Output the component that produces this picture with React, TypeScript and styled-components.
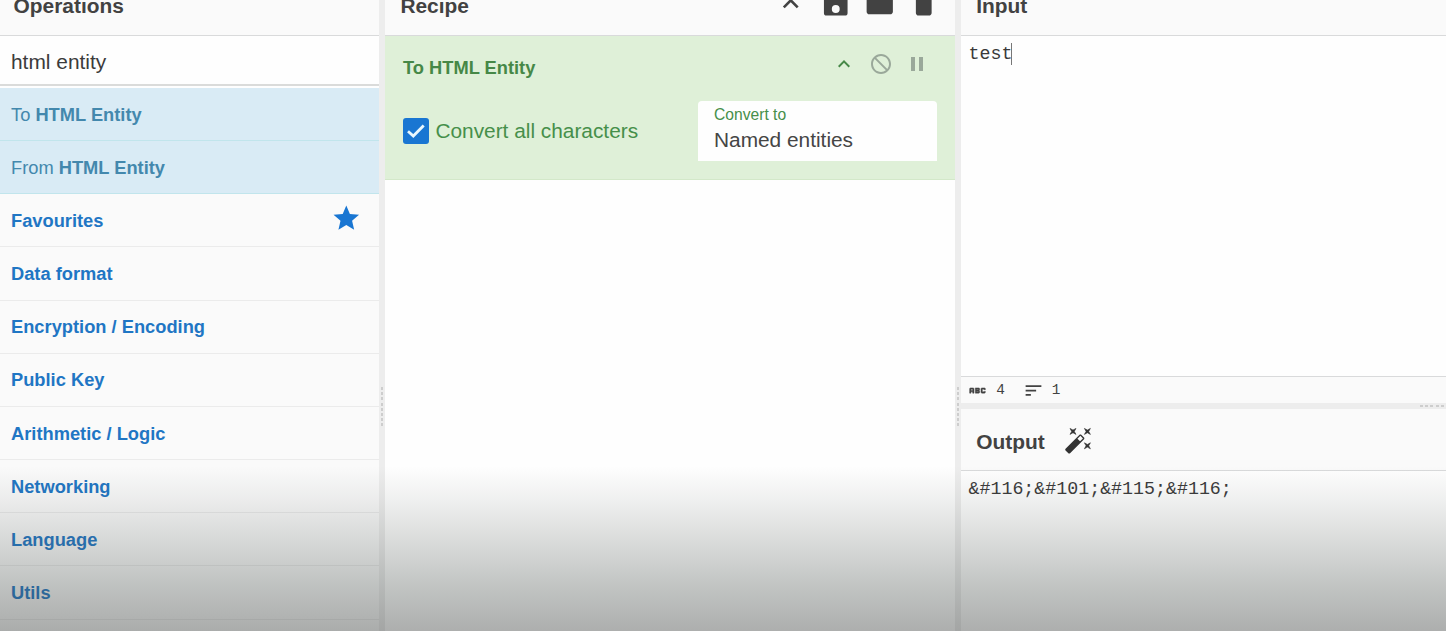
import React from 'react';
import styled, { createGlobalStyle, css } from 'styled-components';
import { MdAbc, MdSort, MdStar, MdKeyboardArrowUp, MdFolder, MdPause, MdNotInterested, MdDelete } from 'react-icons/md';

const GlobalStyle = createGlobalStyle`
  *, *::before, *::after { box-sizing: border-box; }
  html, body { margin: 0; height: 100%; overflow: hidden; background: #fefefe; }
  body { font-family: "Liberation Sans", Arial, sans-serif; color: #424242; }
  svg { display: block; flex: none; }
`;

const Workspace = styled.div`
  position: relative;
  display: grid;
  grid-template-columns: 379px 6px 570px 6px 1fr;
  width: 100%;
  height: 631px;
  overflow: hidden;
  background: #fefefe;
`;

const Column = styled.section`
  display: flex;
  flex-direction: column;
  min-width: 0;
  height: 657px;
  margin-top: -26px;
`;

const Title = styled.header<{ $inset: number; $drop?: number }>`
  display: flex;
  align-items: center;
  flex: none;
  height: 62px;
  padding: ${(p) => p.$drop ?? 2}px 22px 0 ${(p) => p.$inset}px;
  background: #fafafa;
  border-bottom: 1px solid #d9dadb;
  font-size: 20.9px;
  font-weight: 700;
  line-height: 24px;
`;

const Gutter = styled.div<{ $horizontal?: boolean }>`
  display: flex;
  flex: none;
  background: #ededed;
  ${(p) =>
    p.$horizontal
      ? css`
          height: 6px;
          align-items: center;
          padding-left: 459px;
        `
      : css`
          justify-content: center;
          padding-top: 387px;
        `}
`;

const Grip = styled.span<{ $horizontal?: boolean }>`
  ${(p) =>
    p.$horizontal
      ? css`
          width: 26px;
          height: 2px;
          background: repeating-linear-gradient(90deg, #cdcdcd 0 3px, transparent 3px 5.2px);
        `
      : css`
          width: 2px;
          height: 39px;
          background: repeating-linear-gradient(180deg, #cdcdcd 0 3px, transparent 3px 5.2px);
        `}
`;

const Search = styled.input`
  flex: none;
  width: 100%;
  height: 50px;
  margin: 0 0 2px;
  padding: 4px 11px 0;
  border: 0;
  border-bottom: 2px solid #dadbda;
  border-radius: 0;
  outline: 0;
  background: #fefefe;
  color: #3b3b3b;
  font: 20.9px "Liberation Sans", Arial, sans-serif;
`;

const List = styled.ul`
  margin: 0;
  padding: 0;
  list-style: none;
`;

const Operation = styled.li`
  display: flex;
  align-items: center;
  height: 53.17px;
  padding: 1px 11px 0;
  background: #d9ebf5;
  border-bottom: 1px solid #c1e5ec;
  color: #4388ad;
  font-size: 18.3px;
  white-space: pre;
`;

const Category = styled.li`
  display: flex;
  align-items: center;
  justify-content: space-between;
  height: 53.17px;
  padding: 1px 17.6px 0 11px;
  background: #fafafa;
  border-bottom: 1px solid #ebebeb;
  color: #1f76c4;
  font-size: 18.3px;
  font-weight: 700;

  svg { margin-top: -4.6px; }
`;

const HeaderTools = styled.div`
  display: flex;
  align-items: center;
  gap: 12.8px;
  margin: -3px -6.8px 0 auto;
`;

const Ingredient = styled.article`
  flex: none;
  height: 144px;
  padding: 15px 18px 0;
  background: #dff0d8;
  border-bottom: 1px solid #d3e8c9;
  color: #468f4a;
`;

const IngredientHead = styled.div`
  display: flex;
  align-items: center;
  justify-content: space-between;
  height: 32px;
  padding-top: 1px;
  color: #468847;
  font-size: 18.3px;
  font-weight: 700;
`;

const IngredientTools = styled.div`
  display: flex;
  gap: 12.5px;
  margin: -7.4px 7.7px 0 0;
  color: #9aa89a;
`;

const Arguments = styled.div`
  display: flex;
  align-items: center;
  justify-content: space-between;
  height: 60px;
  margin-top: 18px;
`;

const CheckLabel = styled.label`
  display: flex;
  align-items: center;
  gap: 6.4px;
  font-size: 20.85px;
`;

const CheckBox = styled.span`
  display: flex;
  align-items: center;
  justify-content: center;
  width: 26px;
  height: 26px;
  border-radius: 3px;
  background: #1976d2;
`;

const Select = styled.div`
  display: flex;
  flex-direction: column;
  width: 239px;
  height: 60px;
  padding: 5px 16px 0;
  border-radius: 4px 4px 0 0;
  background: #fefefe;
`;

const SelectLabel = styled.span`
  font-size: 15.65px;
  line-height: 18px;
`;

const SelectValue = styled.span`
  margin-top: 4px;
  color: #454545;
  font-size: 20.85px;
  line-height: 24px;
`;

const Editor = styled.div<{ $height?: number }>`
  display: flex;
  align-items: flex-start;
  flex: ${(p) => (p.$height ? 'none' : '1')};
  height: ${(p) => (p.$height ? `${p.$height}px` : 'auto')};
  padding: 7px 7.5px 0;
  background: #fefefe;
  color: #3a3a3a;
  font-family: "Liberation Mono", "Courier New", monospace;
  font-size: 18.3px;
  line-height: 22px;
`;

const Caret = styled.span`
  width: 1px;
  height: 22px;
  margin-left: -1px;
  background: #777;
`;

const Status = styled.footer`
  display: flex;
  align-items: center;
  flex: none;
  height: 27px;
  padding: 0 6px;
  background: #fafafa;
  border-top: 1px solid #d9dadb;
  font-family: "Liberation Mono", "Courier New", monospace;
  font-size: 14.4px;
`;

const LengthIcon = styled(MdAbc)`
  path:last-child {
    stroke: currentColor;
    stroke-width: 0.5px;
  }
`;

const Count = styled.span`
  margin: -1px 17.8px 0 8.2px;
`;

const Shade = styled.div`
  position: absolute;
  inset: 466px 0 0;
  background: linear-gradient(
    rgba(70, 78, 74, 0) 0%,
    rgba(70, 78, 74, 0.08) 20%,
    rgba(70, 78, 74, 0.2) 46%,
    rgba(70, 78, 74, 0.33) 73%,
    rgba(66, 70, 68, 0.43) 100%
  );
  pointer-events: none;
`;

const SaveIcon = () => (
  <svg width="31.5" height="31.5" viewBox="0 0 24 24" fill="currentColor">
    <path d="M15,9H5V5H15M12,19A3,3 0 0,1 9,16A3,3 0 0,1 12,13A3,3 0 0,1 15,16A3,3 0 0,1 12,19M17,3H5C3.89,3 3,3.9 3,5V19A2,2 0 0,0 5,21H19A2,2 0 0,0 21,19V7L17,3Z" />
  </svg>
);

const WandIcon = styled.svg`
  margin: -3px 0 0 19px;
  fill: #333;
`;

const operations = ['To ', 'From '];
const categories = [
  'Favourites',
  'Data format',
  'Encryption / Encoding',
  'Public Key',
  'Arithmetic / Logic',
  'Networking',
  'Language',
  'Utils',
  '',
];

export default function App() {
  return (
    <>
      <GlobalStyle />
      <Workspace>
        <Column>
          <Title $inset={13.6}>Operations</Title>
          <Search defaultValue="html entity" spellCheck={false} />
          <List>
            {operations.map((prefix) => (
              <Operation key={prefix}>
                {prefix}
                <b>HTML Entity</b>
              </Operation>
            ))}
            {categories.map((name) => (
              <Category key={name}>
                {name}
                {name === 'Favourites' && <MdStar size={30.6} color="#1976d2" />}
              </Category>
            ))}
          </List>
        </Column>
        <Gutter>
          <Grip />
        </Gutter>
        <Column>
          <Title $inset={15.4}>
            Recipe
            <HeaderTools>
              <MdKeyboardArrowUp size={31.5} />
              <SaveIcon />
              <MdFolder size={31.5} />
              <MdDelete size={31.5} />
            </HeaderTools>
          </Title>
          <Ingredient>
            <IngredientHead>
              To HTML Entity
              <IngredientTools>
                <MdKeyboardArrowUp size={24} color="#468847" />
                <MdNotInterested size={24} />
                <MdPause size={24} />
              </IngredientTools>
            </IngredientHead>
            <Arguments>
              <CheckLabel>
                <CheckBox>
                  <svg width="26" height="26" viewBox="0 0 26 26" fill="none" stroke="#e8f7ff" strokeWidth="2.8">
                    <path d="M5 13.2L10.3 18L20.7 7.4" />
                  </svg>
                </CheckBox>
                Convert all characters
              </CheckLabel>
              <Select>
                <SelectLabel>Convert to</SelectLabel>
                <SelectValue>Named entities</SelectValue>
              </Select>
            </Arguments>
          </Ingredient>
        </Column>
        <Gutter>
          <Grip />
        </Gutter>
        <Column>
          <Title $inset={15.2}>Input</Title>
          <Editor $height={340}>
            test
            <Caret />
          </Editor>
          <Status>
            <LengthIcon size={21} />
            <Count>4</Count>
            <MdSort size={21} />
            <Count>1</Count>
          </Status>
          <Gutter $horizontal>
            <Grip $horizontal />
          </Gutter>
          <Title $inset={15.2} $drop={4}>
            Output
            <WandIcon width="28.8" height="28.8" viewBox="0 0 24 24">
              <path
                stroke="#333"
                strokeWidth="0.5"
                d="M7.5,5.6L5,7L6.4,4.5L5,2L7.5,3.4L10,2L8.6,4.5L10,7L7.5,5.6M19.5,15.4L22,14L20.6,16.5L22,19L19.5,17.6L17,19L18.4,16.5L17,14L19.5,15.4M22,2L20.6,4.5L22,7L19.5,5.6L17,7L18.4,4.5L17,2L19.5,3.4L22,2"
              />
              <path d="M13.34,12.78L15.78,10.34L13.66,8.22L11.22,10.66L13.34,12.78M14.37,7.29L16.71,9.63C17.1,10 17.1,10.65 16.71,11.04L5.04,22.71C4.65,23.1 4,23.1 3.63,22.71L1.29,20.37C0.9,20 0.9,19.35 1.29,18.96L12.96,7.29C13.35,6.9 14,6.9 14.37,7.29Z" />
            </WandIcon>
          </Title>
          <Editor>&amp;#116;&amp;#101;&amp;#115;&amp;#116;</Editor>
        </Column>
        <Shade />
      </Workspace>
    </>
  );
}
